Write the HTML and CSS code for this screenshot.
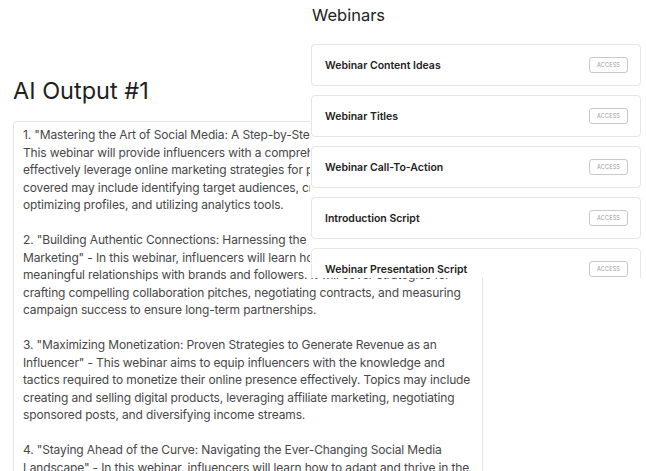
FILE: index.html
```html
<!DOCTYPE html>
<html lang="en">
<head>
<meta charset="utf-8">
<title>AI Output</title>
<link rel="stylesheet" href="styles.css">
</head>
<body>
<main class="page">
  <section class="output">
    <h1 class="output-title">AI Output #1</h1>
    <div class="output-box">1. "Mastering the Art of Social Media: A Step-by-Step Guide for Influencers" - This webinar will provide influencers with a comprehensive guide on how to effectively leverage online marketing strategies for personal branding. Topics covered may include identifying target audiences, creating engaging content, optimizing profiles, and utilizing analytics tools.

2. "Building Authentic Connections: Harnessing the Power of Influencer Marketing" - In this webinar, influencers will learn how to build authentic and meaningful relationships with brands and followers. It will cover strategies for crafting compelling collaboration pitches, negotiating contracts, and measuring campaign success to ensure long-term partnerships.

3. "Maximizing Monetization: Proven Strategies to Generate Revenue as an Influencer" - This webinar aims to equip influencers with the knowledge and tactics required to monetize their online presence effectively. Topics may include creating and selling digital products, leveraging affiliate marketing, negotiating sponsored posts, and diversifying income streams.

4. "Staying Ahead of the Curve: Navigating the Ever-Changing Social Media Landscape" - In this webinar, influencers will learn how to adapt and thrive in the constantly evolving world of social media platforms and algorithms.</div>
  </section>

  <aside class="webinars">
    <h2 class="webinars-title">Webinars</h2>
    <ul class="card-list">
      <li class="card"><span class="card-name">Webinar Content Ideas</span><button class="access">ACCESS</button></li>
      <li class="card"><span class="card-name">Webinar Titles</span><button class="access">ACCESS</button></li>
      <li class="card"><span class="card-name">Webinar Call-To-Action</span><button class="access">ACCESS</button></li>
      <li class="card"><span class="card-name">Introduction Script</span><button class="access">ACCESS</button></li>
      <li class="card"><span class="card-name">Webinar Presentation Script</span><button class="access">ACCESS</button></li>
      <li class="card"><span class="card-name">Webinar Closing Script</span><button class="access">ACCESS</button></li>
    </ul>
  </aside>
</main>
</body>
</html>
```

FILE: styles.css
```css
* { box-sizing: border-box; }

html, body {
  margin: 0;
  padding: 0;
  height: 100%;
  overflow: hidden;
  background: #ffffff;
  font-family: Inter, "Noto Sans", sans-serif;
}

.page {
  position: relative;
  display: flow-root;
  height: 100%;
  padding-left: 13px;
}

.output {
  width: 470px;
}

.output-title {
  margin: 76px 0 0 0;
  font-size: 23.5px;
  line-height: 30px;
  font-weight: 400;
  color: #1f1f1f;
}

.output-box {
  margin-top: 15px;
  height: 420px;
  border: 1px solid #e3e3e3;
  border-radius: 4px;
  padding: 4px 10px 0 9px;
  white-space: pre-line;
  font-size: 12px;
  line-height: 17.5px;
  letter-spacing: -0.14px;
  color: #474747;
}

.webinars {
  position: absolute;
  top: 0;
  left: 310px;
  width: 336px;
  height: 278px;
  overflow: hidden;
  background: #ffffff;
  padding-left: 1px;
}

.webinars-title {
  margin: 4px 0 0 1px;
  font-size: 16.5px;
  line-height: 22px;
  font-weight: 400;
  color: #222222;
}

.card-list {
  list-style: none;
  margin: 18px 0 0 0;
  padding: 0;
  display: flex;
  flex-direction: column;
  gap: 9px;
  width: 330px;
}

.card {
  height: 42px;
  border: 1px solid #e6e6e6;
  border-radius: 4px;
  display: flex;
  align-items: center;
  justify-content: space-between;
  padding: 0 12px 0 13px;
}

.card-name {
  font-size: 10.5px;
  font-weight: 600;
  color: #222222;
}

.access {
  width: 39px;
  height: 16px;
  padding: 0;
  border: 1px solid #c9c9c9;
  border-radius: 3px;
  background: #ffffff;
  font-family: Inter, "Noto Sans", sans-serif;
  font-size: 5.5px;
  letter-spacing: 0.2px;
  color: #9a9a9a;
}
```
